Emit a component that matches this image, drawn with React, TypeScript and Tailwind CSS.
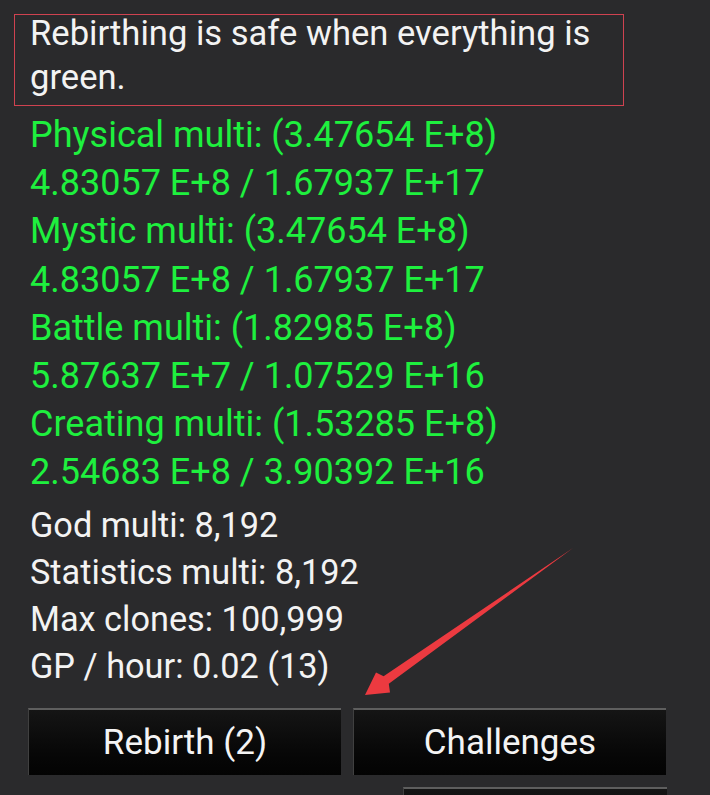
import React from "react";

const greenLines = [
  "Physical multi: (3.47654 E+8)",
  "4.83057 E+8 / 1.67937 E+17",
  "Mystic multi: (3.47654 E+8)",
  "4.83057 E+8 / 1.67937 E+17",
  "Battle multi: (1.82985 E+8)",
  "5.87637 E+7 / 1.07529 E+16",
  "Creating multi: (1.53285 E+8)",
  "2.54683 E+8 / 3.90392 E+16",
];

const whiteLines = [
  "God multi: 8,192",
  "Statistics multi: 8,192",
  "Max clones: 100,999",
  "GP / hour: 0.02 (13)",
];

function GameButton({ label, className = "" }: { label: string; className?: string }) {
  return (
    <div
      className={`flex h-[67px] items-center justify-center border-t-2 border-l border-t-[#5e5e5e] border-l-[#404040] bg-gradient-to-b from-[#151515] to-[#030303] text-[35px] leading-none text-[#f4f4f4] ${className}`}
    >
      {label}
    </div>
  );
}

export default function App() {
  return (
    <div
      className="relative h-[795px] w-[710px] overflow-hidden bg-[#2a2a2c]"
      style={{ fontFamily: "Roboto, 'Noto Sans', sans-serif" }}
    >
      <div className="flex flex-col pt-[14px]">
        <div className="ml-[14px] h-[92px] w-[610px] border border-[#cf4250]">
          <div className="mt-[-4px] pl-[15px] text-[34.6px] leading-[44px] text-[#f3f3f3]">
            Rebirthing is safe when everything is green.
          </div>
        </div>

        <div className="mt-[5px] flex flex-col pl-[30px] text-[36px] leading-[48.2px] text-[#1ef03e]">
          {greenLines.map((l, i) => (
            <div key={i} className="whitespace-nowrap">
              {l}
            </div>
          ))}
        </div>

        <div className="mt-[5px] flex flex-col pl-[30px] text-[34.3px] leading-[47px] text-[#f3f3f3]">
          {whiteLines.map((l, i) => (
            <div key={i} className="whitespace-nowrap">
              {l}
            </div>
          ))}
        </div>

        <div className="mt-[18px] flex gap-[12px] pl-[28px]">
          <GameButton label="Rebirth (2)" className="w-[313px]" />
          <GameButton label="Challenges" className="w-[313px]" />
        </div>

        <div className="mt-[12px] flex pl-[403px]">
          <GameButton label="" className="w-[264px]" />
        </div>
      </div>

      <svg
        className="pointer-events-none absolute left-0 top-0"
        width="710"
        height="795"
        viewBox="0 0 710 795"
      >
        <polygon
          points="365,695 376,672.5 383.6,676.3 573,548 388.8,683.7 390,692.5"
          fill="#ec3a40"
        />
      </svg>
    </div>
  );
}
